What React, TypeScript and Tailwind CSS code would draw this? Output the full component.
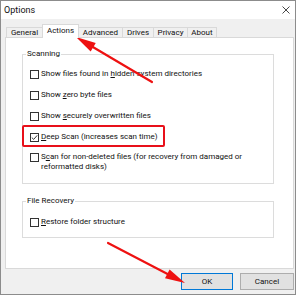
import React from "react";

function Check({ checked }: { checked?: boolean }) {
  return (
    <div className="w-[9px] h-[9px] shrink-0 border border-[#333] bg-white flex items-center justify-center">
      {checked && (
        <svg width="7" height="7" viewBox="0 0 7 7">
          <path d="M0.8 3.6L2.7 5.4L6.2 1.4" fill="none" stroke="#222" strokeWidth="0.9" />
        </svg>
      )}
    </div>
  );
}

function Row({ children, checked, className }: { children: React.ReactNode; checked?: boolean; className?: string }) {
  return (
    <div className={"flex items-start gap-[2px] " + (className || "")}>
      <div className="h-[10px] flex items-center">
        <Check checked={checked} />
      </div>
      <div className="leading-[10px]">{children}</div>
    </div>
  );
}

function Tab({ label, w, selected, first }: { label: string; w: string; selected?: boolean; first?: boolean }) {
  return (
    <div
      className={
        "flex items-center justify-center border-t border-l border-r border-[#d9d9d9] " +
        w +
        " " +
        (first ? "" : "-ml-px ") +
        (selected ? "h-[14px] bg-white relative z-10 -mb-px pb-[2px]" : "h-[10px] bg-[#f0f0f0]")
      }
    >
      <span className="leading-[10px]">{label}</span>
    </div>
  );
}

function Group({ label, className, children }: { label: string; className: string; children: React.ReactNode }) {
  return (
    <div className={"relative border border-[#dcdcdc] " + className}>
      <span className="absolute left-[3px] top-[-6px] bg-white px-[1px] leading-[10px]">{label}</span>
      {children}
    </div>
  );
}

export default function App() {
  return (
    <div className="relative w-[300px] h-[296px] bg-white overflow-hidden font-['Roboto',sans-serif] text-[8px] text-[#111]">
      <div className="flex flex-col w-[296px] h-[295px] border border-[#8c8c8c] bg-[#f0f0f0]">
        <div className="h-[18px] shrink-0 bg-white flex items-center justify-between pl-[3px] pr-[5px]">
          <span className="text-[9px] leading-[10px]">Options</span>
          <svg width="8" height="8" viewBox="0 0 8 8">
            <path d="M0.5 0.5L7.5 7.5M7.5 0.5L0.5 7.5" stroke="#333" strokeWidth="0.9" />
          </svg>
        </div>
        <div className="flex flex-col pl-[4px] pr-[1px]">
          <div className="flex items-end h-[13px] mt-[5px] ml-[1px]">
            <Tab label="General" w="w-[37px]" first />
            <Tab label="Actions" w="w-[37px]" selected />
            <Tab label="Advanced" w="w-[45px]" />
            <Tab label="Drives" w="w-[32px]" />
            <Tab label="Privacy" w="w-[35px]" />
            <Tab label="About" w="w-[30px]" />
          </div>
          <div className="w-[289px] h-[232px] border border-[#d9d9d9] bg-white flex flex-col pl-[16px] pt-[16px]">
            <Group label="Scanning" className="w-[252px] h-[130px] pl-[7px] pt-[14px] flex flex-col">
              <Row>
                Show files found in <span className="underline">h</span>idden system directories
              </Row>
              <Row className="mt-[11px]">
                Show <span className="underline">z</span>ero byte files
              </Row>
              <Row className="mt-[11px]">
                Show <span className="underline">s</span>ecurely overwritten files
              </Row>
              <Row className="mt-[11px]" checked>
                <span className="underline">D</span>eep Scan (increases scan time)
              </Row>
              <Row className="mt-[10px]">
                S<span className="underline">c</span>an for non-deleted files (for recovery from damaged or
                <br />
                reformatted disks)
              </Row>
            </Group>
            <Group label="File Recovery" className="mt-[17px] w-[252px] h-[37px] pl-[7px] pt-[15px] flex flex-col">
              <Row>
                <span className="underline">R</span>estore folder structure
              </Row>
            </Group>
          </div>
          <div className="flex justify-end gap-[7px] mt-[4px]">
            <div className="w-[52px] h-[17px] border border-[#0078d7] bg-[#e1e1e1] flex items-center justify-center">
              <span className="leading-[10px]">OK</span>
            </div>
            <div className="w-[54px] h-[17px] border border-[#adadad] bg-[#e1e1e1] flex items-center justify-center">
              <span className="leading-[10px]">Cancel</span>
            </div>
          </div>
        </div>
      </div>

      {/* annotation highlight */}
      <div className="absolute left-[22px] top-[125px] w-[143px] h-[22px] border-2 border-[#e8101a] rounded-[2px]" />

      {/* annotation arrows */}
      <svg className="absolute left-0 top-0 pointer-events-none" width="300" height="296" viewBox="0 0 300 296">
        <line x1="152" y1="82" x2="92" y2="46.5" stroke="#ee1111" strokeWidth="2.2" strokeLinecap="round" />
        <polygon points="76,37 95.75,42.9 90.65,51.5" fill="#ee1111" />
        <line x1="108" y1="243" x2="168" y2="274.3" stroke="#ee1111" strokeWidth="2.2" strokeLinecap="round" />
        <polygon points="185,283 165,278.2 169.6,269.4" fill="#ee1111" />
      </svg>
    </div>
  );
}
